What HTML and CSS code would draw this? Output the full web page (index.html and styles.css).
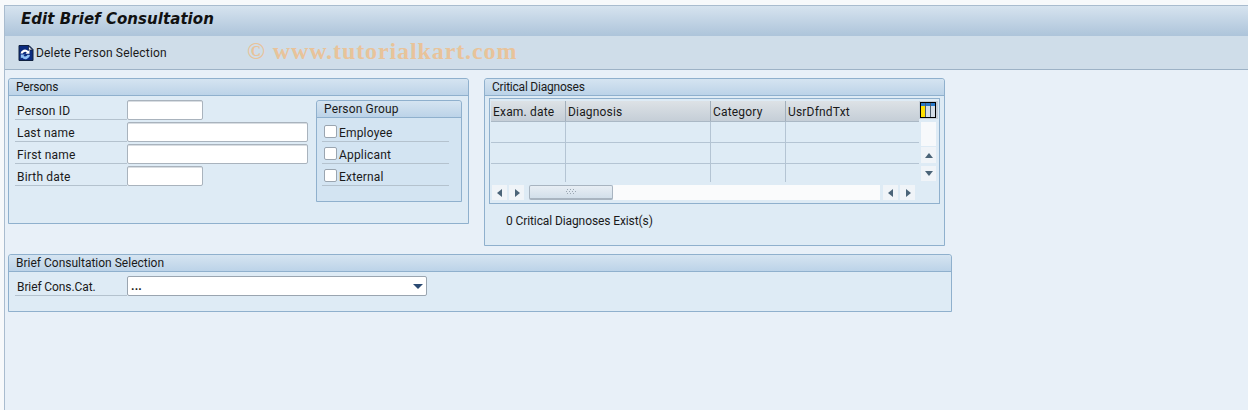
FILE: index.html
```html
<!DOCTYPE html>
<html lang="en">
<head>
<meta charset="utf-8">
<title>Edit Brief Consultation</title>
<link rel="stylesheet" href="styles.css">
</head>
<body>
<div class="window">
  <header class="titlebar"><h1>Edit Brief Consultation</h1></header>
  <div class="toolbar">
    <svg class="tool-icon" width="16" height="16" viewBox="0 0 16 16">
      <path d="M1 .5h10l4 4v11H1z" fill="#0b2a7e" stroke="#10203f"/>
      <path d="M10.500 1v4h4z" fill="#fff" stroke="#10203f" stroke-width=".8"/>
      <path d="M2.500 8.500a4.500 4.500 0 0 1 7.800-2.600L11.500 4.800v4H7.500l1.300-1.400a2.500 2.500 0 0 0-4 1.100z" fill="#fff"/>
      <path d="M12 10a4.500 4.500 0 0 1-8 2.400L2.800 13.500v-4h4L5.500 10.800a2.500 2.500 0 0 0 4-1z" fill="#8fc0f5"/>
    </svg>
    <span>Delete Person Selection</span>
    <span class="watermark">© www.tutorialkart.com</span>
  </div>
  <main class="content">
    <div class="top-row">
      <section class="group persons">
        <h2 class="group-title narrow">Persons</h2>
        <div class="persons-body">
          <div class="form">
            <div class="row"><label>Person ID</label><span class="input short"></span></div>
            <div class="row"><label>Last name</label><span class="input long"></span></div>
            <div class="row"><label>First name</label><span class="input long"></span></div>
            <div class="row"><label>Birth date</label><span class="input short"></span></div>
          </div>
          <section class="group person-group">
            <h3 class="group-title small">Person Group</h3>
            <div class="checks">
              <div class="check"><span class="box"></span>Employee</div>
              <div class="check"><span class="box"></span>Applicant</div>
              <div class="check"><span class="box"></span>External</div>
            </div>
          </section>
        </div>
      </section>
      <section class="group critical">
        <h2 class="group-title narrow">Critical Diagnoses</h2>
        <div class="table">
          <div class="table-main">
            <div class="thead">
              <div class="th c1">Exam. date</div>
              <div class="th c2">Diagnosis</div>
              <div class="th c3">Category</div>
              <div class="th c4">UsrDfndTxt</div>
            </div>
            <div class="tr"><div class="td c1"></div><div class="td c2"></div><div class="td c3"></div><div class="td c4"></div></div>
            <div class="tr"><div class="td c1"></div><div class="td c2"></div><div class="td c3"></div><div class="td c4"></div></div>
            <div class="tr last"><div class="td c1"></div><div class="td c2"></div><div class="td c3"></div><div class="td c4"></div></div>
            <div class="hscroll">
              <span class="sbtn"><svg width="6" height="8" viewBox="0 0 6 8"><path d="M5 0v8L0 4z"/></svg></span>
              <span class="sbtn"><svg width="6" height="8" viewBox="0 0 6 8"><path d="M1 0v8l5-4z"/></svg></span>
              <span class="thumb"><svg width="10" height="6" viewBox="0 0 10 6"><path d="M1 0h1v1H1zM4 0h1v1H4zM7 0h1v1H7zM0 2h1v1H0zM3 2h1v1H3zM6 2h1v1H6zM9 2h1v1H9zM1 4h1v1H1zM4 4h1v1H4zM7 4h1v1H7z" fill="#9aa6b2"/></svg></span>
              <span class="track"></span>
              <span class="sbtn"><svg width="6" height="8" viewBox="0 0 6 8"><path d="M5 0v8L0 4z"/></svg></span>
              <span class="sbtn"><svg width="6" height="8" viewBox="0 0 6 8"><path d="M1 0v8l5-4z"/></svg></span>
            </div>
          </div>
          <div class="table-side">
            <div class="config">
              <svg width="16" height="16" viewBox="0 0 16 16">
                <rect x=".5" y=".5" width="15" height="15" fill="#fff" stroke="#000"/>
                <rect x="1" y="1" width="14" height="3" fill="#2a78c8"/>
                <rect x="1" y="4" width="4" height="11" fill="#ffe000"/>
                <rect x="6" y="4" width="4" height="11" fill="#d4dde6"/>
                <rect x="11" y="4" width="4" height="11" fill="#d4dde6"/>
                <path d="M5.500 1v14M10.500 1v14" stroke="#4a5a6a"/>
              </svg>
            </div>
            <div class="vtrack"></div>
            <span class="sbtn v"><svg width="8" height="5" viewBox="0 0 8 5"><path d="M0 5h8L4 0z"/></svg></span>
            <span class="sbtn v"><svg width="8" height="5" viewBox="0 0 8 5"><path d="M0 0h8L4 5z"/></svg></span>
          </div>
        </div>
        <p class="count">0 Critical Diagnoses Exist(s)</p>
      </section>
    </div>
    <section class="group brief">
      <h2 class="group-title">Brief Consultation Selection</h2>
      <div class="row brief-row">
        <label>Brief Cons.Cat.</label>
        <span class="input select"><span>...</span><svg width="10" height="5" viewBox="0 0 10 5"><path d="M0 0h10L5 5z" fill="#2b4a72"/></svg></span>
      </div>
    </section>
  </main>
</div>
</body>
</html>
```
FILE: styles.css
```css
* { box-sizing: border-box; }
html, body { margin: 0; height: 100%; overflow: hidden; }
body {
  background: #f7f9fb;
  font-family: Roboto, "Liberation Sans", sans-serif;
  font-size: 12px;
  letter-spacing: .18px;
  color: #1a1a1a;
  padding: 5px 0 0 4px;
}
.window {
  height: 405px;
  background: #e8f0f8;
  border-left: 1px solid #a9bccf;
  border-top: 1px solid #a9bccf;
  display: flex;
  flex-direction: column;
}
.titlebar {
  height: 30px;
  background: linear-gradient(#d6e3ef, #adc4da);
  padding: 0 0 4px 16px;
  display: flex;
  align-items: center;
}
.titlebar h1 {
  margin: 0;
  font: italic 700 15px "DejaVu Sans", sans-serif;
  letter-spacing: .05px;
  color: #111;
}
.toolbar {
  position: relative;
  height: 34px;
  background: #cfdde9;
  border-bottom: 1px solid #9db2c6;
  display: flex;
  align-items: center;
  padding-left: 13px;
  gap: 2px;
}
.tool-icon { flex: none; }
.watermark {
  position: absolute;
  left: 242px;
  top: 2px;
  font: 700 24px "Liberation Serif", serif;
  letter-spacing: .9px;
  color: #e8c39a;
  white-space: nowrap;
}
.content { padding: 8px 0 0 3px; }
.top-row { display: flex; align-items: flex-start; gap: 15px; }
.group {
  background: #deebf5;
  border: 1px solid #8fb0cd;
  border-radius: 3px 3px 0 0;
}
.group-title {
  margin: 0;
  height: 17px;
  padding: 0 0 0 7px;
  font: 400 12px/17px Roboto, "Liberation Sans", sans-serif;
  letter-spacing: 0;
  background: linear-gradient(#d5e4f1, #bcd3e8);
  border-bottom: 1px solid #8fb0cd;
  border-radius: 3px 3px 0 0;
}
.group-title.narrow { letter-spacing: -.22px; }
.persons { width: 461px; height: 146px; flex: none; }
.persons-body { display: flex; justify-content: space-between; padding: 4px 6px 0 6px; }
.form { display: flex; flex-direction: column; gap: 2px; }
.row {
  display: flex;
  align-items: stretch;
  height: 20px;
}
.row label {
  width: 112px;
  padding: 1px 0 0 2px;
  line-height: 20px;
  border-bottom: 1px solid #b4c2ce;
  flex: none;
}
.input {
  display: block;
  height: 20px;
  background: #fff;
  border: 1px solid #a9b3bd;
  border-radius: 2px;
  box-shadow: inset 0 1px 0 #d8dde2;
}
.short { width: 76px; }
.long { width: 181px; }
.person-group { width: 146px; height: 102px; background: #d3e4f2; }
.group-title.small { padding-left: 7px; letter-spacing: .15px; }
.checks { display: flex; flex-direction: column; gap: 2px; padding: 4px 12px 0 5px; }
.check {
  height: 20px;
  padding-top: 2px;
  display: flex;
  align-items: center;
  gap: 2px;
  border-bottom: 1px solid #b4c2ce;
}
.box {
  width: 13px;
  height: 13px;
  margin: 0 0 2px 2px;
  background: #fff;
  border: 1px solid #9aa5b0;
  border-radius: 2px;
  flex: none;
}
.critical { width: 461px; height: 168px; flex: none; }
.table {
  display: flex;
  margin: 2px 4px 0 4px;
  height: 106px;
  border: 1px solid #8fb0cd;
  background: #deebf5;
  padding: 2px 2px 0 1px;
}
.table-main { width: 428px; flex: none; }
.thead { display: flex; height: 21px; background: linear-gradient(#dde2e6, #c5ced7); border-bottom: 1px solid #aab8c5; }
.th { line-height: 22px; padding-left: 2px; border-right: 1px solid #a2afbb; white-space: nowrap; }
.c1 { width: 75px; }
.c2 { width: 145px; }
.c3 { width: 75px; }
.c4 { flex: 1; border-right: 0; }
.tr { display: flex; height: 21px; border-bottom: 1px solid #b4c4d3; }
.tr.last { height: 18px; border-bottom: 0; }
.td { border-right: 1px solid #b4c4d3; }
.td.c4 { border-right: 0; }
.hscroll { display: flex; align-items: stretch; height: 15px; margin-top: 3px; gap: 2px; padding: 0 4px 0 1px; }
.sbtn {
  width: 15px;
  height: 15px;
  flex: none;
  display: flex;
  align-items: center;
  justify-content: center;
  background: #f0f4f8;
}
.sbtn svg { fill: #4b6478; }
.thumb {
  width: 84px;
  margin-left: 3px;
  flex: none;
  display: flex;
  align-items: center;
  justify-content: center;
  background: linear-gradient(#e8eef4, #d2dfea);
  border: 1px solid #a8b4c0;
  border-bottom-width: 2px;
  border-radius: 2px;
  margin-right: -2px;
}
.track { flex: 1; background: #fafbfc; margin-right: 1px; }
.table-side { width: 19px; flex: none; display: flex; flex-direction: column; align-items: flex-end; }
.config { width: 19px; height: 18px; padding-right: 2px; display: flex; align-items: center; justify-content: flex-end; background: #c5ced7; }
.vtrack { width: 15px; height: 24px; background: #f7f9fb; margin: 3px 2px 0 0; }
.sbtn.v { margin: 1px 2px 0 0; height: 16px; }
.sbtn.v + .sbtn.v { margin-top: 3px; height: 15px; }
.count { margin: 9px 0 0 21px; line-height: 17px; letter-spacing: -.1px; }
.brief { width: 944px; height: 58px; margin-top: 8px; }
.brief-row { margin: 4px 0 0 6px; }
.brief-row label { letter-spacing: -.1px; }
.select {
  width: 300px;
  display: flex;
  align-items: center;
  justify-content: space-between;
  padding: 0 3px 0 3px;
  font-weight: 700;
  box-shadow: none;
  border-color: #9aa5b0;
}
```
